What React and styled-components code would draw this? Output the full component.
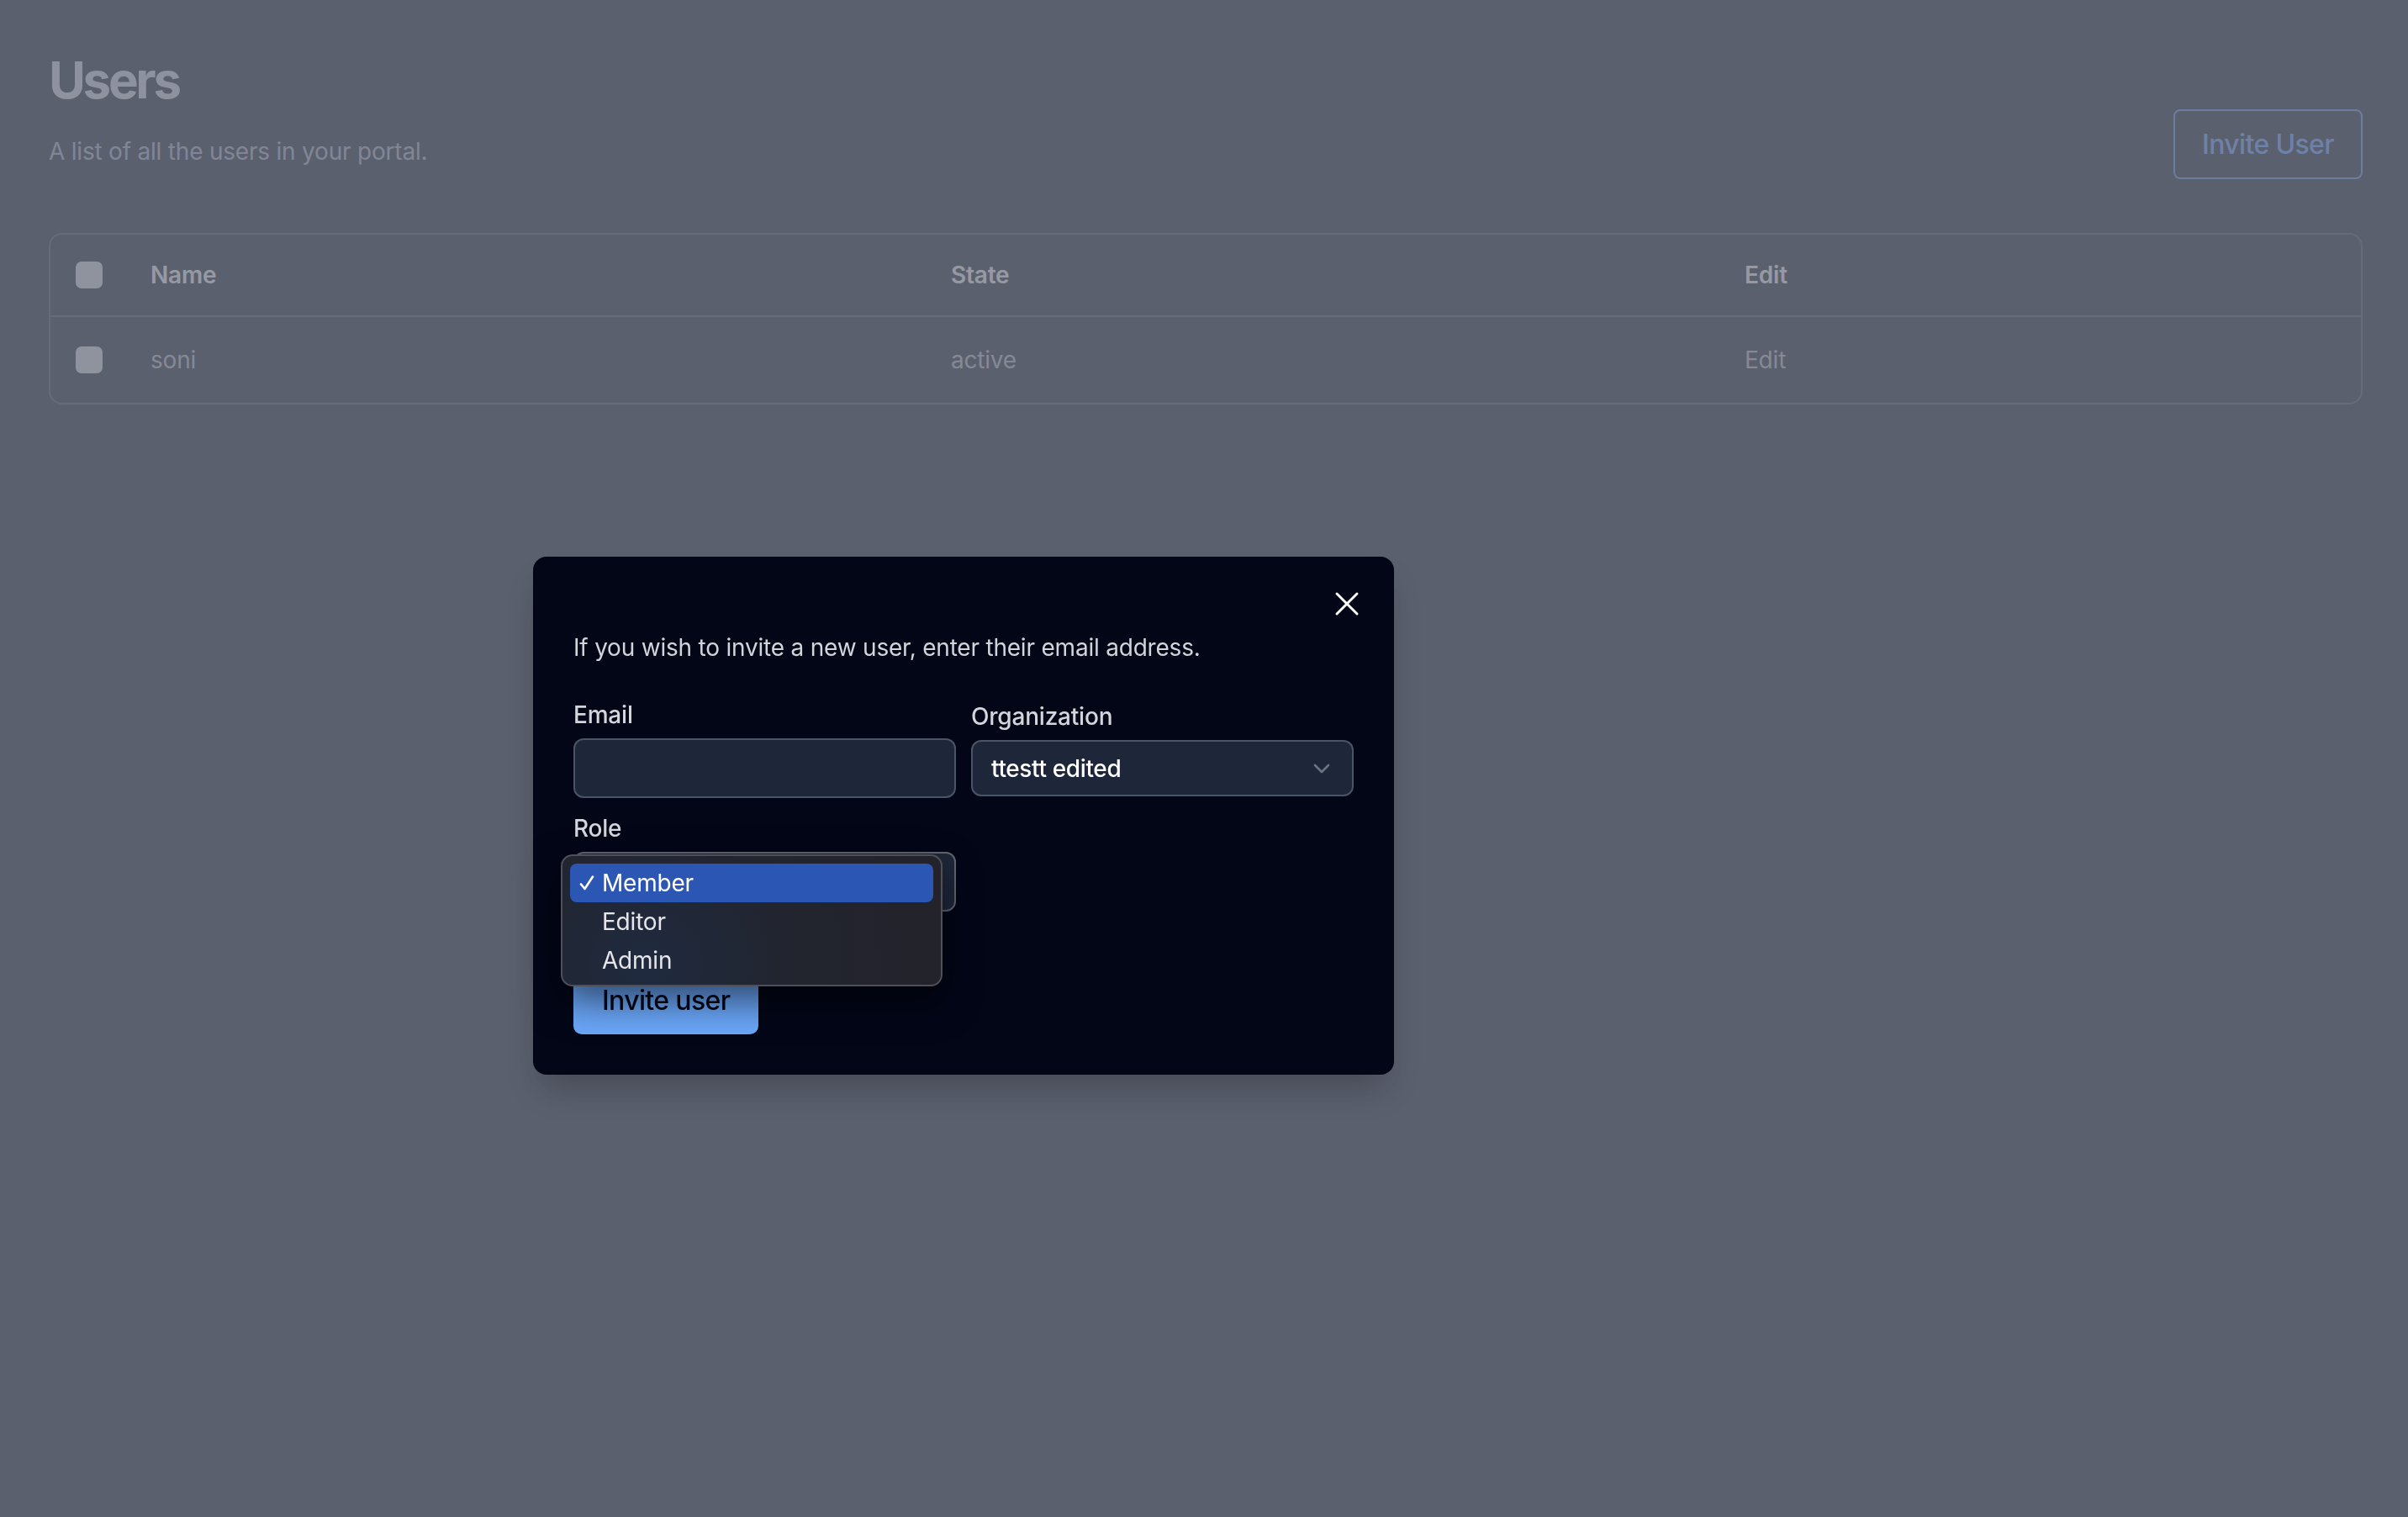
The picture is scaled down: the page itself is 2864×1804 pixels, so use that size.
import React from "react";
import styled, { createGlobalStyle } from "styled-components";

const GlobalStyle = createGlobalStyle`
  html, body {
    margin: 0;
    padding: 0;
  }
  body {
    background: #5c6170;
    font-family: Inter, "Noto Sans", "Liberation Sans", sans-serif;
    letter-spacing: -0.013em;
    -webkit-font-smoothing: antialiased;
  }
  *, *::before, *::after {
    box-sizing: border-box;
  }
`;

const Page = styled.main`
  min-height: 1804px;
  padding: 59px 54px 0 58px;
`;

const Header = styled.header`
  display: flex;
  justify-content: space-between;
  align-items: flex-start;
`;

const Title = styled.h1`
  margin: 0;
  font-size: 60px;
  line-height: 72px;
  font-weight: 700;
  letter-spacing: -0.055em;
  color: #dcdee9;
`;

const Subtitle = styled.p`
  margin: 29px 0 0;
  font-size: 28px;
  line-height: 40px;
  color: #bcc1d5;
`;

const OutlineButton = styled.button`
  margin-top: 71px;
  height: 83px;
  padding: 0 32px;
  border: 2px solid #86acf0;
  border-radius: 8px;
  background: transparent;
  color: #8cb4ff;
  font-family: inherit;
  font-size: 32px;
  font-weight: 500;
  letter-spacing: -0.02em;
`;

const Table = styled.div`
  margin-top: 64px;
  border: 2px solid #7a7f8f;
  border-radius: 16px;
  overflow: hidden;
`;

const Row = styled.div`
  display: grid;
  grid-template-columns: 119px 952px 944px 1fr;
  align-items: center;
  height: ${(p) => (p.$head ? "96px" : "104px")};
  border-top: ${(p) => (p.$head ? "none" : "2px solid #7a7f8f")};
`;

const Cell = styled.div`
  font-size: 28px;
  line-height: 40px;
  font-weight: ${(p) => (p.$head ? 600 : 400)};
  color: ${(p) => (p.$head ? "#f0f0f8" : "#c6c8d5")};
`;

const CheckCell = styled.div`
  display: flex;
  padding-left: 30px;
`;

const Checkbox = styled.input.attrs({ type: "checkbox" })`
  appearance: none;
  margin: 0;
  width: 32px;
  height: 32px;
  border-radius: 7px;
  background: #dee1e9;
`;

const Backdrop = styled.div`
  position: fixed;
  inset: 0;
  background: rgba(90, 95, 108, 0.6);
`;

const DialogLayer = styled.div`
  position: fixed;
  inset: 0;
  display: flex;
  align-items: flex-start;
  padding: 662px 0 0 634px;
`;

const Panel = styled.div`
  position: relative;
  width: 1024px;
  padding: 48px;
  border-radius: 16px;
  background: #020617;
  box-shadow: 0 24px 40px -12px rgba(0, 0, 0, 0.25);
`;

const CloseButton = styled.button`
  position: absolute;
  top: 32px;
  right: 32px;
  width: 48px;
  height: 48px;
  padding: 0;
  border: 0;
  background: none;
  color: #ffffff;
  display: flex;
  align-items: center;
  justify-content: center;
`;

const Description = styled.p`
  margin: 40px 0 0;
  font-size: 28px;
  line-height: 40px;
  color: #d1d5db;
`;

const FormGrid = styled.div`
  margin-top: 40px;
  display: grid;
  grid-template-columns: 455px 455px;
  column-gap: 18px;
  row-gap: 16px;
  align-items: center;
`;

const Field = styled.div`
  display: flex;
  flex-direction: column;
  gap: 8px;
`;

const Label = styled.label`
  font-size: 28px;
  line-height: 40px;
  font-weight: 500;
  color: #d4d6dc;
`;

const TextInput = styled.input`
  height: 71px;
  width: 100%;
  padding: 0 22px;
  border: 2px solid #4b5466;
  border-radius: 12px;
  background: #1e273a;
  color: #ffffff;
  font-family: inherit;
  font-size: 28px;
  outline: none;
`;

const SelectWrap = styled.div`
  position: relative;
`;

const Select = styled.select`
  appearance: none;
  display: block;
  width: 100%;
  height: ${(p) => p.$h}px;
  padding: 0 70px 0 22px;
  border: 2px solid ${(p) => (p.$open ? "#62666f" : "#4b5466")};
  border-radius: 12px;
  background: #1e273a;
  color: #ffffff;
  font-family: inherit;
  font-size: 28px;
  font-weight: 500;
  letter-spacing: -0.013em;
  outline: none;
`;

const Chevron = styled.svg`
  position: absolute;
  right: 28px;
  top: 50%;
  transform: translateY(-50%);
  pointer-events: none;
`;

const Menu = styled.ul`
  position: absolute;
  top: 3px;
  left: -15px;
  z-index: 2;
  width: 454px;
  margin: 0;
  padding: 9px 9px 6px;
  list-style: none;
  border: 2px solid #4e4f58;
  border-radius: 14px;
  background: radial-gradient(
    circle at 22% 85%,
    #1f2a3f 0%,
    #22252f 45%,
    #23222a 100%
  );
  box-shadow: 0 18px 44px rgba(0, 0, 0, 0.55);
`;

const MenuItem = styled.li`
  display: flex;
  align-items: center;
  height: 46px;
  padding-left: 11px;
  border-radius: 8px;
  background: ${(p) => (p.$selected ? "#2c56b4" : "transparent")};
  color: ${(p) => (p.$selected ? "#ffffff" : "#e6e6ea")};
  font-size: 28px;
  line-height: 40px;
`;

const CheckMark = styled.span`
  display: flex;
  width: 27px;
`;

const SubmitButton = styled.button`
  margin-top: 66px;
  height: 80px;
  padding: 0 34px;
  border: 0;
  border-radius: 10px;
  background: #6aa6f8;
  color: #030712;
  font-family: inherit;
  font-size: 32px;
  line-height: 48px;
  font-weight: 500;
  letter-spacing: -0.02em;
`;

const users = [{ id: 1, name: "soni", state: "active" }];
const roles = ["Member", "Editor", "Admin"];

const ChevronIcon = () => (
  <Chevron width="20" height="12" viewBox="0 0 20 12" fill="none">
    <path
      d="M2 2l8 8 8-8"
      stroke="#6b7280"
      strokeWidth="2.6"
      strokeLinecap="round"
      strokeLinejoin="round"
    />
  </Chevron>
);

const RoleMenu = ({ selected }) => (
  <Menu>
    {roles.map((role) => (
      <MenuItem key={role} $selected={role === selected}>
        <CheckMark>
          {role === selected && (
            <svg width="18" height="18" viewBox="0 0 18 18" fill="none">
              <path
                d="M2 10.5l4.5 5.5L16 1.5"
                stroke="#ffffff"
                strokeWidth="2.6"
                strokeLinecap="round"
                strokeLinejoin="round"
              />
            </svg>
          )}
        </CheckMark>
        {role}
      </MenuItem>
    ))}
  </Menu>
);

const InviteDialog = () => (
  <DialogLayer>
    <Panel>
      <CloseButton aria-label="Close">
        <svg width="48" height="48" viewBox="0 0 24 24" fill="none">
          <path
            d="M6 18L18 6M6 6l12 12"
            stroke="currentColor"
            strokeWidth="1.5"
            strokeLinecap="round"
          />
        </svg>
      </CloseButton>
      <Description>
        If you wish to invite a new user, enter their email address.
      </Description>
      <FormGrid>
        <Field>
          <Label htmlFor="email">Email</Label>
          <TextInput id="email" type="email" />
        </Field>
        <Field>
          <Label htmlFor="org">Organization</Label>
          <SelectWrap>
            <Select id="org" $h={67} defaultValue="ttestt edited">
              <option>ttestt edited</option>
            </Select>
            <ChevronIcon />
          </SelectWrap>
        </Field>
        <Field>
          <Label htmlFor="role">Role</Label>
          <SelectWrap>
            <Select id="role" $h={71} $open defaultValue="Member">
              {roles.map((r) => (
                <option key={r}>{r}</option>
              ))}
            </Select>
            <ChevronIcon />
            <RoleMenu selected="Member" />
          </SelectWrap>
        </Field>
      </FormGrid>
      <SubmitButton>Invite user</SubmitButton>
    </Panel>
  </DialogLayer>
);

export default function App() {
  return (
    <>
      <GlobalStyle />
      <Page>
        <Header>
          <div>
            <Title>Users</Title>
            <Subtitle>A list of all the users in your portal.</Subtitle>
          </div>
          <OutlineButton>Invite User</OutlineButton>
        </Header>
        <Table>
          <Row $head>
            <CheckCell>
              <Checkbox />
            </CheckCell>
            <Cell $head>Name</Cell>
            <Cell $head>State</Cell>
            <Cell $head>Edit</Cell>
          </Row>
          {users.map((u) => (
            <Row key={u.id}>
              <CheckCell>
                <Checkbox />
              </CheckCell>
              <Cell>{u.name}</Cell>
              <Cell>{u.state}</Cell>
              <Cell>Edit</Cell>
            </Row>
          ))}
        </Table>
      </Page>
      <Backdrop />
      <InviteDialog />
    </>
  );
}
